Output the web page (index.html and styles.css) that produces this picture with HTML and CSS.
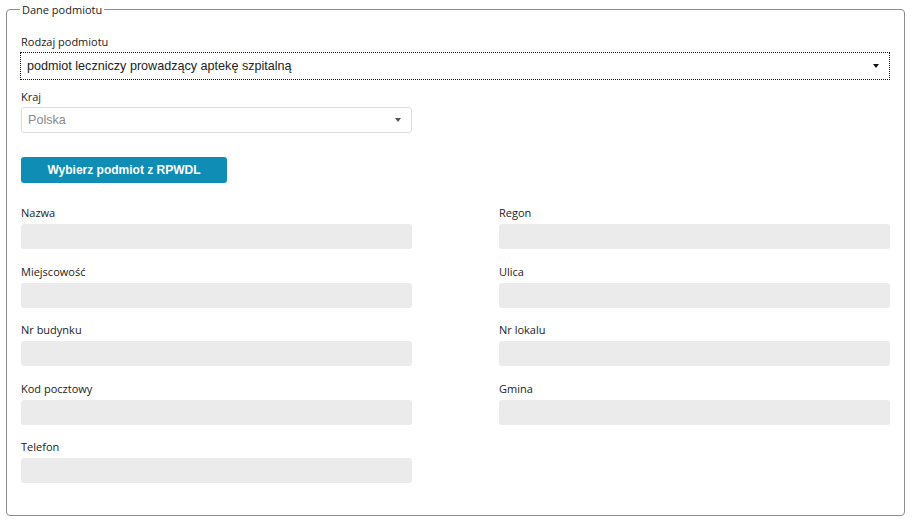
FILE: index.html
```html
<!DOCTYPE html>
<html lang="pl">
<head>
<meta charset="utf-8">
<title>Dane podmiotu</title>
<link rel="stylesheet" href="styles.css">
</head>
<body>
<div class="page">
  <fieldset class="box">
    <legend class="box-legend">Dane podmiotu</legend>
    <div class="field">
      <div class="label">Rodzaj podmiotu</div>
      <div class="select select-focus">
        <span class="select-text">podmiot leczniczy prowadzący aptekę szpitalną</span>
        <span class="caret"></span>
      </div>
    </div>
    <div class="field field-kraj">
      <div class="label">Kraj</div>
      <div class="select select-half select-disabled">
        <span class="select-text">Polska</span>
        <span class="caret caret-gray"></span>
      </div>
    </div>
    <button class="btn" type="button">Wybierz podmiot z RPWDL</button>
    <div class="grid">
      <div class="cell"><div class="label label-b">Nazwa</div><div class="input"></div></div>
      <div class="cell"><div class="label label-b">Regon</div><div class="input"></div></div>
      <div class="cell"><div class="label label-b">Miejscowość</div><div class="input"></div></div>
      <div class="cell"><div class="label label-b">Ulica</div><div class="input"></div></div>
      <div class="cell"><div class="label label-b">Nr budynku</div><div class="input"></div></div>
      <div class="cell"><div class="label label-b">Nr lokalu</div><div class="input"></div></div>
      <div class="cell"><div class="label label-b">Kod pocztowy</div><div class="input"></div></div>
      <div class="cell"><div class="label label-b">Gmina</div><div class="input"></div></div>
      <div class="cell"><div class="label label-b">Telefon</div><div class="input"></div></div>
    </div>
  </fieldset>
</div>
</body>
</html>
```
FILE: styles.css
```css
html, body {
  margin: 0;
  padding: 0;
  background: #ffffff;
}
.page {
  padding: 3px 8px 0 6px;
  font-family: "Open Sans", "Liberation Sans", sans-serif;
  color: #222;
}
.box {
  margin: 0;
  border: 1px solid #8d8d8d;
  border-radius: 4px;
  padding: 19px 12px 32px 14px;
  min-width: 0;
}
.box-legend {
  padding: 0 2px;
  margin-left: -1px;
  font-size: 11px;
  line-height: 13px;
  color: #222;
}
.label {
  font-size: 11px;
  line-height: 13px;
  color: #222;
  margin-bottom: 4px;
}
.label-b {
  margin-bottom: 5px;
}
.field-kraj {
  margin-top: 10px;
}
.select {
  height: 28px;
  box-sizing: border-box;
  display: flex;
  align-items: center;
  justify-content: space-between;
  padding: 0 10px 0 6px;
  font-family: "Liberation Sans", Arial, sans-serif;
  font-size: 12.6px;
  color: #222;
}
.select-focus {
  border: 1px dotted #111;
  margin: 0 2px 0 -1px;
}
.select-half {
  width: 391px;
  height: 26px;
  border: 1px solid #dedede;
  border-radius: 3px;
  margin-left: 0;
}
.select-disabled {
  color: #8a8a8a;
}
.caret {
  width: 0;
  height: 0;
  border-left: 3.5px solid transparent;
  border-right: 3.5px solid transparent;
  border-top: 4px solid #111;
}
.caret-gray {
  border-top-color: #555;
}
.btn {
  display: block;
  margin-top: 24px;
  width: 206px;
  height: 26px;
  border: 0;
  border-radius: 3px;
  background: #0f8db4;
  color: #ffffff;
  font-family: "Liberation Sans", Arial, sans-serif;
  font-weight: bold;
  font-size: 12px;
  padding: 0;
}
.grid {
  margin-top: 23px;
  display: grid;
  grid-template-columns: 391px 391px;
  column-gap: 87px;
  row-gap: 15.5px;
}
.input {
  height: 25px;
  background: #ebebeb;
  border-radius: 3px;
}
```
